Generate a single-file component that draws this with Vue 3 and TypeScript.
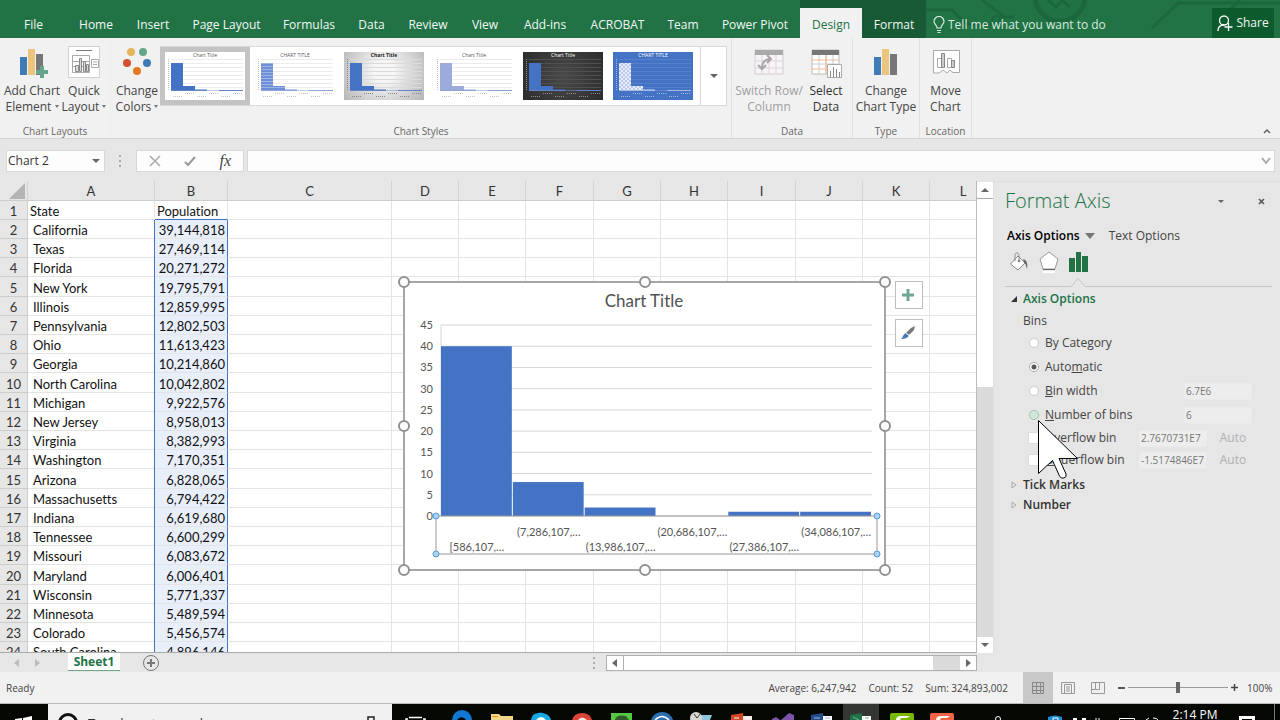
<script setup lang="ts">
import { ref } from 'vue'

interface Tab { name: string; kind?: string }
interface StateRow { state: string; population: string }

const tabs: Tab[] = [
  { name: 'File' }, { name: 'Home' }, { name: 'Insert' }, { name: 'Page Layout' },
  { name: 'Formulas' }, { name: 'Data' }, { name: 'Review' }, { name: 'View' },
  { name: 'Add-ins' }, { name: 'ACROBAT' }, { name: 'Team' }, { name: 'Power Pivot' },
  { name: 'Design', kind: 'active' }, { name: 'Format', kind: 'context' },
]

const columns = ['A', 'B', 'C', 'D', 'E', 'F', 'G', 'H', 'I', 'J', 'K', 'L']
const emptyColumns = columns.slice(2)

const rows: StateRow[] = [
  { state: 'California', population: '39,144,818' },
  { state: 'Texas', population: '27,469,114' },
  { state: 'Florida', population: '20,271,272' },
  { state: 'New York', population: '19,795,791' },
  { state: 'Illinois', population: '12,859,995' },
  { state: 'Pennsylvania', population: '12,802,503' },
  { state: 'Ohio', population: '11,613,423' },
  { state: 'Georgia', population: '10,214,860' },
  { state: 'North Carolina', population: '10,042,802' },
  { state: 'Michigan', population: '9,922,576' },
  { state: 'New Jersey', population: '8,958,013' },
  { state: 'Virginia', population: '8,382,993' },
  { state: 'Washington', population: '7,170,351' },
  { state: 'Arizona', population: '6,828,065' },
  { state: 'Massachusetts', population: '6,794,422' },
  { state: 'Indiana', population: '6,619,680' },
  { state: 'Tennessee', population: '6,600,299' },
  { state: 'Missouri', population: '6,083,672' },
  { state: 'Maryland', population: '6,006,401' },
  { state: 'Wisconsin', population: '5,771,337' },
  { state: 'Minnesota', population: '5,489,594' },
  { state: 'Colorado', population: '5,456,574' },
  { state: 'South Carolina', population: '4,896,146' },
]

const bins = [
  { count: 40, label: '[586,107,…' },
  { count: 8, label: '(7,286,107,…' },
  { count: 2, label: '(13,986,107,…' },
  { count: 0, label: '(20,686,107,…' },
  { count: 1, label: '(27,386,107,…' },
  { count: 1, label: '(34,086,107,…' },
]
const plot = { left: 45, right: 476, top: 51, bottom: 242 }
const binWidth = (plot.right - plot.left) / bins.length
const yFor = (v: number): number => plot.bottom - (v / 45) * (plot.bottom - plot.top)
const xFor = (i: number): number => plot.left + i * binWidth
const ticks = Array.from({ length: 10 }, (_, i) => i * 5)

const handles = [
  [8, 8], [249, 8], [489, 8], [8, 152], [489, 152], [8, 296], [249, 296], [489, 296],
]
const axisHandles = [[40, 242], [481, 242], [40, 280], [481, 280]]

const styles = ['plain', 'lined', 'gray', 'soft', 'dark', 'blue']
const styleTitle = (s: string): string => (s === 'lined' || s === 'blue' ? 'CHART TITLE' : 'Chart Title')
const thumbLabelX = [8, 20, 32, 44, 56, 68]

const binMode = ref('automatic')
const binWidthValue = ref('6.7E6')
const binCount = ref('6')
const overflow = ref('2.7670731E7')
const underflow = ref('-1.5174846E7')
const nameBox = ref('Chart 2')
const formula = ref('')
const zoom = ref(50)
</script>

<template>
  <div class="app">
    <header class="titlebar">
      <svg class="decor" width="480" height="38" viewBox="0 0 480 38" fill="none" stroke="#195f3a" aria-hidden="true">
        <circle cx="6" cy="16" r="14" stroke-width="5" />
        <path d="M126 10H152L166 24H192M182 0L204 17H214" stroke-width="3" />
        <circle cx="260" cy="-4" r="25" stroke-width="5" />
        <path d="M248 0L256 7L262 0L270 7" stroke-width="3" />
        <circle cx="196" cy="20" r="4" stroke-width="2" />
        <path d="M352 28L378 3H480M430 10L440 0" stroke-width="3" />
      </svg>
      <nav class="tabs">
        <button v-for="t in tabs" :key="t.name" type="button" class="tab" :class="t.kind">{{ t.name }}</button>
      </nav>
      <button type="button" class="tell">
        <svg width="12" height="18" viewBox="0 0 12 18" fill="none" stroke="#d8ebdf" stroke-width="1.2">
          <path d="M4 12C4 9 1 8 1 5.5A5 5 0 0 1 11 5.500C11 8 8 9 8 12ZM4 14.500H8M4.500 16.500H7.500" />
        </svg>
        <span>Tell me what you want to do</span>
      </button>
      <button type="button" class="share">
        <svg width="16" height="17" viewBox="0 0 16 17" fill="none" stroke="#fff" stroke-width="1.3">
          <circle cx="7" cy="5.500" r="4.500" /><path d="M1 16C1 12 3.500 10 7 10M11.500 8V16M7.500 12H15.500" />
        </svg>
        <span>Share</span>
      </button>
    </header>

    <section class="ribbon">
      <div class="group layouts">
        <div class="tools">
          <button type="button" class="tool add">
            <svg width="32" height="32" viewBox="0 0 32 32">
              <path d="M4 11H11V29H4Z" fill="#3f7cb5" /><path d="M12 3H19V29H12Z" fill="#ecc57d" /><path d="M20 8H27V29H20Z" fill="#777" />
              <path d="M24 20H28V24H32V28H28V32H24V28H20V24H24Z" fill="#65a58b" />
            </svg>
            <span>Add Chart<br>Element <i class="caret"></i></span>
          </button>
          <button type="button" class="tool quick">
            <svg width="32" height="32" viewBox="0 0 32 32" fill="#fff" stroke="#aaa">
              <path d="M.5 .5H31.500V31.500H.5Z" stroke="#d0d0d0" /><path d="M8 4.500H24" stroke="#777" />
              <path d="M4.500 9.500H21.500V26.500H4.500ZM4 15.500H21M4 20.500H21" />
              <path d="M7.500 19.500H10.500V25.500H7.500ZM11.500 12.500H13.500V25.500H11.500ZM15.500 15.500H17.500V25.500H15.500ZM18.500 18.500H20.500V25.500H18.500Z" fill="#ddd" stroke="#888" />
              <path d="M23.500 13.500H30.500V21.500H23.500ZM25 16H29M25 18.500H29" />
            </svg>
            <span>Quick<br>Layout <i class="caret"></i></span>
          </button>
        </div>
        <h2>Chart Layouts</h2>
      </div>

      <div class="group looks">
        <div class="tools">
          <button type="button" class="tool colors">
            <svg width="32" height="32" viewBox="0 0 32 32">
              <circle cx="10" cy="6" r="4" fill="#e7b55e" /><circle cx="22" cy="6" r="4" fill="#65a58b" />
              <circle cx="6" cy="17" r="4" fill="#d5502e" /><circle cx="26" cy="17" r="4" fill="#3f7cb5" />
              <circle cx="16" cy="25" r="4" fill="#e27a22" />
            </svg>
            <span>Change<br>Colors <i class="caret"></i></span>
          </button>
          <div class="gallery">
            <div class="thumbs">
              <button v-for="(s, n) in styles" :key="s" type="button" class="thumb" :class="[s, { chosen: n === 0 }]" :aria-label="'Style ' + (n + 1)">
                <svg width="80" height="48" viewBox="0 0 80 48">
                  <defs v-if="n === 0">
                    <pattern id="stripes" width="4" height="3" patternUnits="userSpaceOnUse"><path d="M0 0H4V2H0Z" fill="#6f8fd6" /><path d="M0 2H4V3H0Z" fill="#9db3e4" /></pattern>
                    <pattern id="checks" width="4" height="4" patternUnits="userSpaceOnUse"><path d="M0 0H4V4H0Z" fill="#e6ecf9" /><path d="M0 0H2V2H0ZM2 2H4V4H2Z" fill="#bccbed" /></pattern>
                  </defs>
                  <text x="40" y="5" text-anchor="middle" class="thumb-title">{{ styleTitle(s) }}</text>
                  <path class="lines" d="M6 7.500H78M6 11.500H78M6 15.500H78M6 19.500H78M6 23.500H78M6 27.500H78M6 31.500H78M6 35.500H78" />
                  <path class="labels" d="M3.500 7V39" stroke-dasharray="1 2" />
                  <path class="bars" d="M6 11H18V39H6ZM18 34H30V39H18ZM30 37.500H42V39H30ZM54 38H78V39H54Z" />
                  <path class="base" d="M6 38.500H78" />
                  <path v-for="(x, k) in thumbLabelX" :key="x" class="labels" :d="`M${x} ${k % 2 ? 41.5 : 44.5}h9`" />
                </svg>
              </button>
            </div>
            <button type="button" class="more" aria-label="More styles"><i class="arrow"></i></button>
          </div>
        </div>
        <h2>Chart Styles</h2>
      </div>

      <div class="group data">
        <div class="tools">
          <button type="button" class="tool switch" disabled>
            <svg width="32" height="32" viewBox="0 0 32 32" fill="none">
              <path d="M2 4H30V28H2Z" fill="#f6f4f6" stroke="#d4cdd4" /><path d="M2 4H30V9H2Z" fill="#aaa" /><path d="M2 15H30M2 22H30M9 9V28M16 9V28M23 9V28" stroke="#ddd3da" />
              <path d="M9 22C9 16 12 13 18 13M14 9L18 13L14 17M5 19L9 23L13 19" stroke="#a9a5aa" stroke-width="2" />
            </svg>
            <span>Switch Row/<br>Column</span>
          </button>
          <button type="button" class="tool select">
            <svg width="34" height="32" viewBox="0 0 34 32" fill="none">
              <path d="M3 4H30V28H3Z" fill="#fff" stroke="#bbb" /><path d="M3 4H30V9H3Z" fill="#777" /><path d="M10 9V28M17 9V28M24 9V28M3 18H30" stroke="#ccc" /><path d="M3 14H30M3 23H30M17 9V28" stroke="#f0b994" />
              <path d="M18.500 18.500H32.500V31.500H18.500Z" fill="#fff" stroke="#aaa" /><path d="M21.500 31V25M24.500 31V21M27.500 31V23M30.500 31V26" stroke="#888" />
            </svg>
            <span>Select<br>Data</span>
          </button>
        </div>
        <h2>Data</h2>
      </div>

      <div class="group type">
        <div class="tools">
          <button type="button" class="tool">
            <svg width="32" height="32" viewBox="0 0 32 32"><path d="M4 11H11V29H4Z" fill="#3f7cb5" /><path d="M12 3H19V29H12Z" fill="#ecc57d" /><path d="M20 8H27V29H20Z" fill="#777" /></svg>
            <span>Change<br>Chart Type</span>
          </button>
        </div>
        <h2>Type</h2>
      </div>

      <div class="group location">
        <div class="tools">
          <button type="button" class="tool">
            <svg width="32" height="32" viewBox="0 0 32 32" fill="#fff" stroke="#aaa">
              <path d="M3.500 4.500H29.500V26.500H23L20 24L17 27L13 24L9 27H3.500Z" /><path d="M7.500 12.500H11.500V21.500H7.500ZM17.500 12.500H21.500V21.500H17.500Z" /><path d="M11.500 7.500H14.500V21.500H11.500ZM21.500 14.500H24.500V21.500H21.500Z" fill="#ccc" stroke="#888" />
            </svg>
            <span>Move<br>Chart</span>
          </button>
        </div>
        <h2>Location</h2>
      </div>
      <button type="button" class="collapse" aria-label="Collapse the ribbon"><svg width="8" height="6" viewBox="0 0 8 6" fill="none" stroke="#666" stroke-width="1.500"><path d="M1 5L4 2L7 5" /></svg></button>
    </section>

    <section class="formulabar">
      <div class="namebox">
        <input v-model="nameBox" type="text" aria-label="Name box">
        <i class="arrow"></i>
      </div>
      <svg class="grip" width="4" height="14" viewBox="0 0 4 14" fill="#aaa"><path d="M1 1H3V3H1ZM1 6H3V8H1ZM1 11H3V13H1Z" /></svg>
      <div class="edit">
        <button type="button" aria-label="Cancel"><svg width="12" height="12" viewBox="0 0 12 12" fill="none" stroke="#aaa" stroke-width="1.500"><path d="M1 1L11 11M11 1L1 11" /></svg></button>
        <button type="button" aria-label="Enter"><svg width="12" height="12" viewBox="0 0 12 12" fill="none" stroke="#999" stroke-width="2"><path d="M1 7L4 10L11 2" /></svg></button>
        <button type="button" class="fx" aria-label="Insert function">fx</button>
      </div>
      <div class="formula">
        <input v-model="formula" type="text" aria-label="Formula">
        <svg width="10" height="8" viewBox="0 0 10 8" fill="none" stroke="#aaa" stroke-width="2"><path d="M1 1L5 6L9 1" /></svg>
      </div>
    </section>

    <main class="workspace">
      <div class="book">
        <div class="sheet-row">
          <div class="sheet">
            <table>
              <colgroup>
                <col class="w-head"><col class="w-a"><col class="w-b"><col class="w-c">
                <col class="w-n"><col class="w-n"><col class="w-w"><col class="w-n"><col class="w-n"><col class="w-w"><col class="w-n"><col class="w-n"><col class="w-n"><col>
              </colgroup>
              <thead>
                <tr>
                  <th class="corner"><svg width="16" height="16" viewBox="0 0 16 16"><path d="M16 0V16H0Z" fill="#b4b4b4" /></svg></th>
                  <th v-for="c in columns" :key="c" scope="col">{{ c }}</th>
                </tr>
              </thead>
              <tbody>
                <tr>
                  <th scope="row">1</th><td>State</td><td class="pop-head">Population</td><td v-for="c in emptyColumns" :key="c"></td>
                </tr>
                <tr v-for="(r, i) in rows" :key="r.state">
                  <th scope="row">{{ i + 2 }}</th>
                  <td class="state">{{ r.state }}</td>
                  <td class="pop">{{ r.population }}</td>
                  <td v-for="c in emptyColumns" :key="c"></td>
                </tr>
              </tbody>
            </table>

            <svg class="chart" width="498" height="305" viewBox="0 0 498 305">
              <rect x="8" y="8" width="481" height="288" fill="#fff" stroke="#a6a6a6" stroke-width="2" />
              <text x="248" y="33" text-anchor="middle" class="chart-title">Chart Title</text>
              <g v-for="t in ticks" :key="t">
                <path :d="`M${plot.left} ${yFor(t)}H${plot.right}`" stroke="#d6d6d6" />
                <text x="37" :y="yFor(t) + 4" text-anchor="end" class="tick">{{ t }}</text>
              </g>
              <path :d="`M${plot.left} ${plot.top}V${plot.bottom}`" stroke="#d6d6d6" />
              <rect v-for="(b, i) in bins" :key="b.label" :x="xFor(i)" :y="yFor(b.count)" :width="binWidth - 1" :height="plot.bottom - yFor(b.count)" fill="#4472c4" />
              <text v-for="(b, i) in bins" :key="b.label" :x="xFor(i) + binWidth / 2" :y="i % 2 ? 262 : 277" text-anchor="middle" class="tick">{{ b.label }}</text>
              <rect x="40" y="242" width="441" height="38" fill="none" stroke="#999" />
              <circle v-for="h in axisHandles" :key="h.join()" :cx="h[0]" :cy="h[1]" r="3" fill="#a9d3f2" stroke="#5b9bd5" />
              <circle v-for="h in handles" :key="h.join()" :cx="h[0]" :cy="h[1]" r="5" fill="#fff" stroke="#919191" stroke-width="2" />
            </svg>
            <div class="chart-buttons">
              <button type="button" aria-label="Chart elements"><svg width="12" height="12" viewBox="0 0 12 12"><path d="M4.500 0H7.500V4.500H12V7.500H7.500V12H4.500V7.500H0V4.500H4.500Z" fill="#6fa891" /></svg></button>
              <button type="button" aria-label="Chart styles">
                <svg width="14" height="14" viewBox="0 0 14 14"><path d="M14 0L13 4L8 9L5 7L10 2Z" fill="#777" /><path d="M5 7L8 9C7 12 4 13 0 13C2 12 2 8 5 7Z" fill="#3f7cb5" /><path d="M5 7L8 9.500" stroke="#fff" /></svg>
              </button>
            </div>
          </div>
          <div class="vscroll">
            <button type="button" aria-label="Scroll up"><i class="arrow up"></i></button>
            <div class="vtrack"><div class="vthumb"></div></div>
            <button type="button" aria-label="Scroll down"><i class="arrow"></i></button>
          </div>
        </div>
        <div class="sheetbar">
          <div class="sheetnav"><i class="arrow left pale"></i><i class="arrow right pale"></i></div>
          <button type="button" class="sheettab">Sheet1</button>
          <button type="button" class="newsheet" aria-label="New sheet"><svg width="18" height="18" viewBox="0 0 18 18" fill="none" stroke="#777"><circle cx="9" cy="9" r="7.500" /><path d="M5 9H13M9 5V13" stroke-width="2" /></svg></button>
          <svg class="grip" width="4" height="14" viewBox="0 0 4 14" fill="#aaa"><path d="M1 1H3V3H1ZM1 6H3V8H1ZM1 11H3V13H1Z" /></svg>
          <div class="hscroll">
            <button type="button" aria-label="Scroll left"><i class="arrow left"></i></button>
            <div class="hthumb"></div>
            <button type="button" aria-label="Scroll right"><i class="arrow right"></i></button>
          </div>
        </div>
      </div>

      <aside class="pane">
        <div class="pane-head">
          <h1>Format Axis</h1>
          <button type="button" aria-label="Pane options"><i class="arrow small"></i></button>
          <button type="button" aria-label="Close pane"><svg width="7" height="7" viewBox="0 0 7 7" stroke="#555" stroke-width="1.600"><path d="M1 1L6 6M6 1L1 6" /></svg></button>
        </div>
        <div class="pane-tabs">
          <button type="button" class="current">Axis Options <i class="arrow big"></i></button>
          <button type="button">Text Options</button>
        </div>
        <div class="pane-icons">
          <button type="button" aria-label="Fill and line">
            <svg width="20" height="20" viewBox="0 0 20 20" fill="#fff" stroke="#888"><path d="M9 4L16 11L9 18L1.500 12Z" /><path d="M6 9V3.500C6 0 10 0 10 3.500V9" fill="none" /><circle cx="10" cy="9" r="1" fill="#666" /><path d="M14 7C18 8 19 12 18 17C17 14 17 12 15 10Z" fill="#666" stroke="none" /></svg>
          </button>
          <button type="button" aria-label="Effects">
            <svg width="20" height="22" viewBox="0 0 20 22"><path d="M10 1L19 8L16 18H4L1 8Z" fill="#fff" stroke="#999" /><path d="M4 18.500H16" stroke="#666" /><path d="M4 21H16" stroke="#fff" stroke-width="2" /></svg>
          </button>
          <button type="button" aria-label="Axis options">
            <svg width="20" height="20" viewBox="0 0 20 20" fill="#217346"><path d="M0 6H6V20H0ZM7 0H12V20H7ZM13 4H19V20H13Z" /></svg>
          </button>
        </div>
        <div class="divider"><span></span><svg width="14" height="9" viewBox="0 0 14 9" fill="none" stroke="#bfc8c3"><path d="M0 8.500L7 .5L14 8.500" /></svg><span class="grow"></span></div>
        <button type="button" class="section open"><svg width="6" height="6" viewBox="0 0 6 6"><path d="M6 0V6H0Z" fill="#333" /></svg>Axis Options</button>
        <p class="sub">Bins</p>
        <div class="option">
          <label><input v-model="binMode" type="radio" value="category">By Cate<u>g</u>ory</label>
        </div>
        <div class="option">
          <label><input v-model="binMode" type="radio" value="automatic">Auto<u>m</u>atic</label>
        </div>
        <div class="option">
          <label><input v-model="binMode" type="radio" value="width"><u>B</u>in width</label>
          <input v-model="binWidthValue" type="text" class="field" aria-label="Bin width">
        </div>
        <div class="option">
          <label><input v-model="binMode" type="radio" value="number" class="hover"><u>N</u>umber of bins</label>
          <input v-model="binCount" type="text" class="field" aria-label="Number of bins">
        </div>
        <div class="option tight">
          <label><input type="checkbox"><u>O</u>verflow bin</label>
          <input v-model="overflow" type="text" class="field" aria-label="Overflow bin">
          <button type="button" disabled>Auto</button>
        </div>
        <div class="option tight">
          <label><input type="checkbox"><u>U</u>nderflow bin</label>
          <input v-model="underflow" type="text" class="field" aria-label="Underflow bin">
          <button type="button" disabled>Auto</button>
        </div>
        <div class="more-sections">
          <button type="button" class="section closed"><svg width="6" height="8" viewBox="0 0 6 8"><path d="M1 1L5 4L1 7Z" fill="none" stroke="#aaa" /></svg>Tick Marks</button>
          <button type="button" class="section closed"><svg width="6" height="8" viewBox="0 0 6 8"><path d="M1 1L5 4L1 7Z" fill="none" stroke="#aaa" /></svg>Number</button>
        </div>
        <svg class="pointer" width="42" height="62" viewBox="0 0 42 62"><path d="M1.500 2.500V55.500L15.500 42.500L22.500 58Q24 61 27 60Q30 59 29 56L22 40.500H40.500Z" fill="#fff" stroke="#000" /></svg>
      </aside>
    </main>

    <footer class="status">
      <span class="ready">Ready</span>
      <div class="stats"><span>Average: 6,247,942</span><span>Count: 52</span><span>Sum: 324,893,002</span></div>
      <div class="views">
        <button type="button" class="on" aria-label="Normal"><svg width="14" height="14" viewBox="0 0 14 14" fill="none" stroke="#888"><path d="M1.500 1.500H12.500V12.500H1.500ZM1 5.500H13M1 9.500H13M5.500 1V13M9.500 1V13" /></svg></button>
        <button type="button" aria-label="Page layout"><svg width="14" height="14" viewBox="0 0 14 14" fill="none" stroke="#999"><path d="M.5 1.500H13.500V12.500H.5ZM3.500 3.500H10.500V12.500M3.500 3.500V12.500M5 6H9M5 8H9M5 10H9" /></svg></button>
        <button type="button" aria-label="Page break preview"><svg width="14" height="14" viewBox="0 0 14 14" fill="none" stroke="#999"><path d="M.5 1.500H13.500V12.500H.5ZM.5 8.500H4.500V1.500M4.500 8.500H8.500V1.500" /></svg></button>
      </div>
      <div class="zoom">
        <button type="button" aria-label="Zoom out"><svg width="7" height="7" viewBox="0 0 7 7"><path d="M0 3H7V5H0Z" fill="#555" /></svg></button>
        <input v-model="zoom" type="range" min="0" max="100" aria-label="Zoom">
        <button type="button" aria-label="Zoom in"><svg width="7" height="7" viewBox="0 0 7 7"><path d="M0 3H3V0H4V3H7V4H4V7H3V4H0Z" fill="#444" stroke="#444" stroke-width=".5" /></svg></button>
        <span>100%</span>
      </div>
    </footer>

    <div class="taskbar">
      <button type="button" class="start" aria-label="Start"><svg width="18" height="18" viewBox="0 0 18 18" fill="#fff"><path d="M0 3L7 2V9H0ZM8 2L17 0V9H8Z" /></svg></button>
      <div class="search">
        <svg width="20" height="20" viewBox="0 0 20 20" fill="none" stroke="#111" stroke-width="3"><circle cx="10" cy="10" r="8.500" /></svg>
        <span>Type here to search</span>
        <svg class="mic" width="8" height="20" viewBox="0 0 8 20" fill="none" stroke="#222" stroke-width="1.500"><path d="M1 1H7V16H1Z" /></svg>
      </div>
      <svg class="apps" width="584" height="16" viewBox="400 704 584 16">
        <path d="M409 717.500H422M406 720V719H408M423 719H425V720" stroke="#fff" stroke-width="1.500" fill="none" />
        <path d="M452 720A10 10 0 0 1 472 720H466A5 5 0 0 0 457 720Z" fill="#1277d2" />
        <path d="M491 714H499L501 716H513V720H491Z" fill="#f3d58a" /><path d="M492 716H498V717H492Z" fill="#d49d22" />
        <path d="M531 720A8 8 0 0 1 538 713C542 712 550 714 551 720Z" fill="#16a9e6" /><path d="M536 720Q541 714 546 720Z" fill="#fff" />
        <path d="M572 720Q574 713 582 713Q590 713 592 720Z" fill="#db4437" /><path d="M578 720Q582 715 587 720Z" fill="#f4e9df" />
        <path d="M611 713H632V720H611Z" fill="#55c943" /><path d="M615 720Q616 714 626 716L629 720Z" fill="#315a2d" />
        <path d="M651 720Q654 712 662 712Q670 712 673 720Z" fill="#2c70b4" /><path d="M655 720Q662 713 669 720" stroke="#fff" stroke-width="1.500" fill="none" />
        <path d="M700 715H712L710 720H696Z" fill="#8dc7df" /><circle cx="696" cy="718" r="6" fill="#d8d8d0" /><path d="M694 714L697 718L701 713" stroke="#333" fill="none" />
        <path d="M731 715L743 713V720H731Z" fill="#d24625" /><path d="M743 716H752V720H743Z" fill="#f4e9e5" /><path d="M734 718H739M745 718H750" stroke="#fff" />
        <path d="M772 719L776 717L780 720H772ZM781 720L789 713L794 715V720Z" fill="#7d54aa" />
        <path d="M811 715L823 713V720H811Z" fill="#244d8c" /><path d="M823 716H832V720H823Z" fill="#fff" /><path d="M814 718H820M825 718H830" stroke="#9ab5dc" />
        <path d="M843 704H879V720H843Z" fill="#343634" /><path d="M850 715L862 713V720H850Z" fill="#1f7246" /><path d="M862 716H871V720H862Z" fill="#fff" /><path d="M853 717L859 720M865 718H869" stroke="#75b892" />
        <path d="M890 715Q890 713 892 713H912Q914 713 914 715V720H890Z" fill="#78b800" /><path d="M896 720Q896 716 901 716H910L907 718H901L900 720Z" fill="#fff" />
        <path d="M930 715Q930 713 932 713H952Q954 713 954 715V720H930Z" fill="#f16444" /><path d="M936 720Q936 716 941 716H950L947 718H941L940 720Z" fill="#fff" />
      </svg>
      <svg class="tray" width="180" height="16" viewBox="984 704 180 16" fill="none" stroke="#fff">
        <circle cx="998" cy="719" r="2.500" /><path d="M1048 717Q1055 714 1062 717V720H1048Z" fill="#1d8bd1" stroke="none" /><path d="M1053 720V718H1058V720" />
        <path d="M1073 719H1077M1082 719H1086" stroke-width="2" /><path d="M1096 718V720M1099 718V720" /><path d="M1119.500 720V718.500H1134.500V720" /><path d="M1146 720L1149 718M1153 718Q1157 718 1158 720" />
      </svg>
      <time>2:14 PM</time>
      <svg class="notes" width="16" height="16" viewBox="0 0 16 16"><path d="M0 12H16V16H0Z" fill="#fff" /><path d="M3 15H13V16H3Z" fill="#000" /></svg>
      <span class="peek"></span>
    </div>
  </div>
</template>

<style>
html, body { margin: 0; background: #e6e6e6; }
</style>

<style scoped>
.app { display: flex; flex-direction: column; height: 100vh; overflow: hidden; font: 12px/16px "Open Sans", "Noto Sans", sans-serif; color: #444; background: #e6e6e6; }
button { font: inherit; color: inherit; background: none; border: 0; padding: 0; margin: 0; display: flex; align-items: center; justify-content: center; }
input { font: inherit; color: inherit; border: 0; padding: 0; margin: 0; background: none; min-width: 0; }
h1, h2, p { margin: 0; font-weight: 400; }
svg { flex: none; display: block; }

.arrow { display: block; flex: none; width: 0; height: 0; border: 4px solid transparent; border-top-color: #666; border-bottom-width: 0; }
.arrow.up { border: 4px solid transparent; border-bottom-color: #666; border-top-width: 0; }
.arrow.left { border: 4px solid transparent; border-right: 5px solid #666; border-left-width: 0; }
.arrow.right { border: 4px solid transparent; border-left: 5px solid #666; border-right-width: 0; }
.arrow.left.pale { border-right-color: #bbb; }
.arrow.right.pale { border-left-color: #bbb; }
.arrow.small { border-width: 3px 3px 0; }
.arrow.big { border-width: 6px 5px 0; border-top-color: #777; }
.caret { display: inline-block; border: 2px solid transparent; border-top: 3px solid #777; border-bottom-width: 0; vertical-align: 3px; }

.titlebar { position: relative; flex: none; display: flex; align-items: stretch; height: 38px; background: #217346; color: #f2f8f4; }
.decor { position: absolute; top: 0; right: 0; opacity: .6; }
.tabs { position: relative; flex: none; display: grid; grid-template-columns: 67px 58px 56px 91px 74px 51px 62px 52px 68px 77px 54px 90px 62px 64px; }
.tab { padding-top: 12px; white-space: nowrap; }
.tab.active { margin-top: 8px; padding-top: 4px; background: #f1f1f1; color: #217346; box-shadow: 0 -8px #195a36; }
.tab.context { background: #195a36; }
.tell { position: relative; padding: 12px 0 0 7px; gap: 3px; color: #d8ebdf; white-space: nowrap; }
.share { position: relative; margin: 8px 6px 0 auto; width: 62px; gap: 3px; background: #0d5b2c; }

.ribbon { flex: none; display: flex; height: 100px; background: #f1f1f1; border-bottom: 1px solid #d5d5d5; position: relative; }
.group { display: flex; flex-direction: column; justify-content: space-between; border-right: 1px solid #e1e1e1; padding-top: 8px; box-sizing: border-box; flex: none; }
.group h2 { text-align: center; font-size: 10px; line-height: 14px; color: #666; }
.tools { display: flex; }
.layouts { width: 111px; border-right-color: #eee; }
.looks { width: 621px; }
.data { width: 121px; }
.type { width: 67px; }
.location { width: 52px; }
.tool { flex-direction: column; gap: 5px; white-space: nowrap; flex: 1; justify-content: flex-start; }
.tool.add { flex: none; width: 64px; }
.tool.quick { flex: none; width: 40px; }
.tool.colors { flex: none; width: 52px; }
.tool.switch { flex: none; width: 74px; color: #a0a0a0; }
.tool.select { flex: none; width: 40px; color: #333; }
.gallery { display: flex; width: 565px; height: 58px; background: #fff; border: 1px solid #d8d8d8; margin-left: -3px; }
.thumbs { flex: 1; display: flex; justify-content: space-between; padding: 5px 7px 5px 4px; }
.more { width: 26px; border-left: 1px solid #d8d8d8; }
.thumb { width: 80px; height: 48px; background: #fff; }
.thumb.chosen { box-shadow: 0 0 0 5px #c3c3c3; }
.thumb-title { font: 5px "Open Sans", sans-serif; fill: #555; }
.lines { stroke: #ececef; fill: none; }
.labels { stroke: #c2c2c2; fill: none; stroke-dasharray: 1 1; }
.bars { fill: #4472c4; }
.base { stroke: #7c98cf; stroke-width: .5; }
.lined .bars { fill: url(#stripes); }
.gray { background: radial-gradient(circle at 50% 40%, #f6f6f6 20%, #b5b5b5); }
.gray .thumb-title { fill: #222; font-weight: 700; }
.gray .lines { stroke: #dadada; }
.gray .labels { stroke: #888; }
.soft .bars { fill: #9dabdc; }
.dark { background: radial-gradient(circle, #4a4a4a, #2c2c2c); }
.dark .thumb-title, .blue .thumb-title { fill: #fff; }
.dark .lines { stroke: #505050; }
.dark .labels { stroke: #8d8d8d; }
.blue { background: #4472c4; }
.blue .lines { stroke: #5680cc; }
.blue .bars { fill: url(#checks); }
.blue .labels { stroke: #a5bbe6; }
.collapse { position: absolute; right: 9px; bottom: 4px; }

.formulabar { flex: none; display: flex; align-items: center; height: 42px; padding: 1px 5px 0 6px; box-sizing: border-box; }
.namebox, .edit, .formula { display: flex; align-items: center; height: 20px; background: #fdfdfd; border: 1px solid #d8d8d8; }
.namebox { width: 93px; padding-right: 4px; }
.namebox input { flex: 1; padding-left: 1px; color: #333; }
.grip { margin: 0 14px 0 13px; }
.edit { width: 106px; justify-content: space-around; }
.edit button { width: 32px; }
.edit .fx { font: italic 16px/18px "Liberation Serif", serif; color: #444; }
.formula { flex: 1; margin-left: 3px; padding-right: 3px; }
.formula input { flex: 1; }

.workspace { flex: 1; display: flex; min-height: 0; }
.book { flex: 1; display: flex; flex-direction: column; min-width: 0; }
.sheet-row { flex: 1; display: flex; min-height: 0; }
.sheet { flex: 1; position: relative; overflow: hidden; background: #fff; border-bottom: 1px solid #ababab; }
table { table-layout: fixed; width: calc(100% + 20px); border-collapse: separate; border-spacing: 0; font: 13px/16px Lato, "Open Sans", sans-serif; font-variant-ligatures: none; color: #111; }
.w-head { width: 28px; }
.w-a { width: 127px; }
.w-b { width: 73px; }
.w-c { width: 164px; }
.w-n { width: 67px; }
.w-w { width: 68px; }
th, td { box-sizing: border-box; height: 19px; padding: 2px 2px 0; border-right: 1px solid #e4e4e4; border-bottom: 1px solid #e4e4e4; font-weight: 400; white-space: nowrap; }
tbody tr:nth-child(5n) > * { height: 20px; }
th { background: #e6e6e6; border-color: #cdcdcd; color: #333; }
thead th { height: 20px; padding-top: 0; border-right-color: #d2d2d2; }
.corner svg { margin-left: auto; }
td.state { padding-left: 5px; }
td.pop-head { border-bottom-color: #4472c4; }
td.pop { text-align: right; background: #e9eefb; border-right-color: #4472c4; box-shadow: -1px 0 #4472c4; }
.chart { position: absolute; left: 396px; top: 93px; }
.chart-title { font: 17px Lato, sans-serif; fill: #505050; }
.tick { font: 11px Lato, sans-serif; fill: #555; }
.chart-buttons { position: absolute; left: 895px; top: 100px; display: flex; flex-direction: column; gap: 10px; }
.chart-buttons button { width: 28px; height: 28px; background: #fff; border: 1px solid #bdbdbd; box-sizing: border-box; padding-right: 2px; }

.vscroll { flex: none; width: 16px; display: flex; flex-direction: column; border-left: 1px solid #bbb; padding-top: 1px; border-right: 1px solid #e0e0e0; }
.vscroll button { background: #fff; height: 16px; }
.vtrack { flex: 1; background: #dadada; border-top: 1px solid #aaa; }
.vthumb { height: 43%; background: #fff; }
.sheetbar { flex: none; display: flex; align-items: center; height: 19px; padding-right: 17px; }
.sheetnav { display: flex; gap: 16px; width: 54px; padding-left: 14px; }
.sheettab { width: 52px; height: 18px; align-self: flex-start; background: #fff; color: #217346; font-weight: 700; border-bottom: 1px solid #6fa88a; }
.newsheet { margin-left: 22px; }
.sheetbar .grip { margin: 0 10px 0 auto; }
.hscroll { display: flex; width: 38%; height: 16px; border: 1px solid #b0b0b0; background: #dadada; box-sizing: border-box; justify-content: space-between; }
.hscroll button { width: 16px; background: #fff; }
.hthumb { flex: 1; background: #fff; border-left: 1px solid #b0b0b0; margin-right: 27px; }

.pane { position: relative; flex: none; width: 275px; padding-left: 11px; border-top: 1px solid #dedede; }
.pane-head { display: flex; align-items: center; height: 38px; padding-right: 15px; }
.pane-head h1 { flex: 1; font-size: 20px; line-height: 28px; font-weight: 300; color: #217346; }
.pane-head button { margin-left: 34px; }
.pane-tabs { display: flex; gap: 14px; height: 31px; padding-left: 2px; }
.pane-tabs button { gap: 5px; }
.pane-tabs .current { font-weight: 600; color: #000; }
.pane-icons { display: flex; gap: 10px; height: 22px; padding-left: 4px; }
.divider { display: flex; align-items: flex-end; height: 14px; padding-right: 8px; }
.divider span { width: 66px; border-bottom: 1px solid #bfc8c3; }
.divider .grow { flex: 1; }
.section { gap: 6px; height: 24px; padding-left: 6px; font-weight: 600; color: #333; }
.section.open { color: #217346; }
.section.closed { height: 20px; }
.more-sections { padding-top: 4px; }
.sub { padding-left: 18px; line-height: 20px; }
.option { display: flex; align-items: center; height: 24px; padding: 0 28px 0 24px; }
.option label { flex: 1; display: flex; align-items: center; white-space: pre; }
.option input[type="radio"] { appearance: none; width: 10px; height: 10px; border: 1px solid #ccc; border-radius: 50%; background: #fff; margin-right: 6px; }
.option input[type="radio"]:checked { background: radial-gradient(circle, #555 2px, #fff 3px); border-color: #aaa; }
.option input.hover { background: #d3e8dc; border-color: #9bc5ae; }
.option input[type="checkbox"] { appearance: none; width: 12px; height: 12px; border: 1px solid #ddd; background: #fff; margin: 0 5px 0 -1px; }
.field { width: 68px; height: 17px; box-sizing: border-box; padding-left: 1px; background: #ededed; color: #777; font-size: 10px; border: 1px solid #eaeaea; }
.option.tight { height: 22px; padding-right: 34px; }
.option.tight button { width: 26px; margin-left: 13px; color: #b0b0b0; }
.pointer { position: absolute; left: 43px; top: 236px; }

.status { flex: none; display: flex; align-items: center; height: 31px; background: #f1f1f1; border-bottom: 1px solid #b8b8b8; font-size: 10px; color: #444; }
.ready { flex: 1; padding-left: 6px; }
.stats { display: flex; gap: 12px; margin-right: 15px; }
.views { display: flex; align-self: stretch; }
.views button { width: 30px; }
.views .on { background: #c8c8c8; }
.zoom { display: flex; align-items: center; flex: none; width: 167px; padding-left: 5px; gap: 3px; box-sizing: border-box; }
.zoom input { appearance: none; width: 100px; height: 12px; background: linear-gradient(#999, #999) center / 100% 1px no-repeat; }
.zoom input::-webkit-slider-thumb { appearance: none; width: 4px; height: 11px; background: #666; }
.zoom span { padding-left: 6px; }

.taskbar { flex: none; display: flex; height: 16px; overflow: hidden; background: #050703; align-items: flex-start; color: #fff; }
.start { width: 48px; padding-top: 12px; }
.search { display: flex; flex: none; width: 344px; height: 16px; background: #f1f1f1; color: #333; font-size: 13px; overflow: hidden; box-sizing: border-box; padding-left: 10px; align-items: flex-start; }
.search svg { margin-top: 9px; }
.search span { padding: 9px 0 0 10px; line-height: 20px; }
.search .mic { margin: 12px 17px 0 auto; }
.apps { margin-left: 8px; }
.tray { margin-left: auto; }
time { width: 62px; margin: 3px 13px 0 0; text-align: center; white-space: nowrap; }
.notes { margin-right: 19px; }
.peek { width: 1px; height: 16px; margin-right: 5px; background: #777; }
</style>
